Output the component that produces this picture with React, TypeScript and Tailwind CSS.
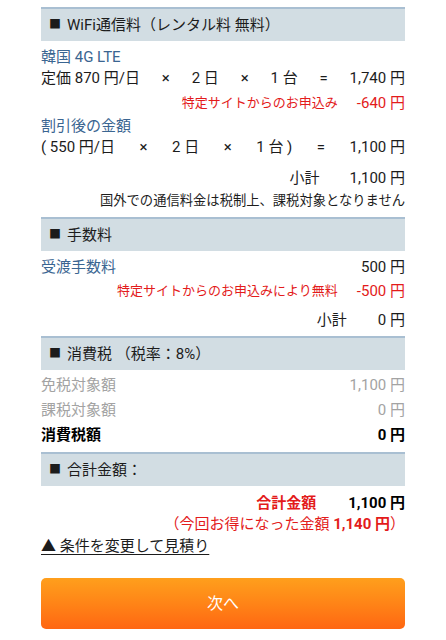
import React from "react";

const font = { fontFamily: 'Roboto, "Noto Sans CJK JP", sans-serif' };

function Header({ children }: { children: React.ReactNode }) {
  return (
    <div className="h-[34px] border-t-2 border-[#a9bfd2] bg-[#d2dde3] flex items-center pl-[8px] text-[15px] text-[#1c1c1c]">
      <span className="text-[12px] mr-[6px] leading-none">■</span>
      <span>{children}</span>
    </div>
  );
}

export default function App() {
  return (
    <div className="w-[446px] h-[640px] bg-white overflow-hidden" style={font}>
      <div className="mx-[41px] pt-[7px] text-[15px] text-[#1c1c1c]">
        <Header>WiFi通信料（レンタル料 無料）</Header>

        <div className="mt-[5px] h-[22px] flex items-center text-[#3a6591]">韓国 4G LTE</div>
        <div className="h-[21px] flex items-center justify-between">
          <span>定価 870 円/日</span>
          <span>×</span>
          <span>2 日</span>
          <span>×</span>
          <span>1 台</span>
          <span>=</span>
          <span>1,740 円</span>
        </div>
        <div className="mt-[3px] h-[22px] flex items-center justify-end text-[#e31b1b]">
          <span className="text-[13px] mr-[19px]">特定サイトからのお申込み</span>
          <span>-640 円</span>
        </div>
        <div className="mt-[1px] h-[22px] flex items-center text-[#3a6591]">割引後の金額</div>
        <div className="h-[21px] flex items-center justify-between">
          <span>( 550 円/日</span>
          <span>×</span>
          <span>2 日</span>
          <span>×</span>
          <span>1 台 )</span>
          <span>=</span>
          <span>1,100 円</span>
        </div>
        <div className="mt-[9px] h-[22px] flex items-center justify-end">
          <span className="mr-[30px]">小計</span>
          <span>1,100 円</span>
        </div>
        <div className="h-[23px] flex items-center justify-end text-[13.3px]">
          国外での通信料金は税制上、課税対象となりません
        </div>

        <div className="mt-[5px]">
          <Header>手数料</Header>
        </div>
        <div className="mt-[5px] h-[22px] flex items-center justify-between">
          <span className="text-[#3a6591]">受渡手数料</span>
          <span>500 円</span>
        </div>
        <div className="mt-[2px] h-[22px] flex items-center justify-end text-[#e31b1b]">
          <span className="text-[13px] mr-[19px]">特定サイトからのお申込みにより無料</span>
          <span>-500 円</span>
        </div>
        <div className="mt-[7px] h-[22px] flex items-center justify-end">
          <span className="mr-[31px]">小計</span>
          <span>0 円</span>
        </div>

        <div className="mt-[5px]">
          <Header>消費税 （税率：8%）</Header>
        </div>
        <div className="mt-[4px] h-[22px] flex items-center justify-between text-[#a3a3a3]">
          <span>免税対象額</span>
          <span>1,100 円</span>
        </div>
        <div className="mt-[3px] h-[22px] flex items-center justify-between text-[#a3a3a3]">
          <span>課税対象額</span>
          <span>0 円</span>
        </div>
        <div className="mt-[3px] h-[22px] flex items-center justify-between font-bold text-black">
          <span>消費税額</span>
          <span>0 円</span>
        </div>

        <div className="mt-[6px]">
          <Header>合計金額：</Header>
        </div>
        <div className="mt-[6px] h-[22px] flex items-center justify-end font-bold">
          <span className="text-[#e31b1b] mr-[32px]">合計金額</span>
          <span className="text-black">1,100 円</span>
        </div>
        <div className="h-[20px] flex items-center justify-end text-[#e31b1b]">
          <span>（今回お得になった金額 <span className="font-bold">1,140 円</span>）</span>
        </div>
        <div className="mt-[1px] h-[22px] flex items-center">
          <a href="#" className="underline underline-offset-[3px] text-[#1c1c1c]">▲ 条件を変更して見積り</a>
        </div>

        <button className="mt-[21px] w-full h-[51px] rounded-[5px] bg-gradient-to-b from-[#ff9f1c] to-[#ff6612] text-white text-[16px] flex items-center justify-center">
          次へ
        </button>
      </div>
    </div>
  );
}
